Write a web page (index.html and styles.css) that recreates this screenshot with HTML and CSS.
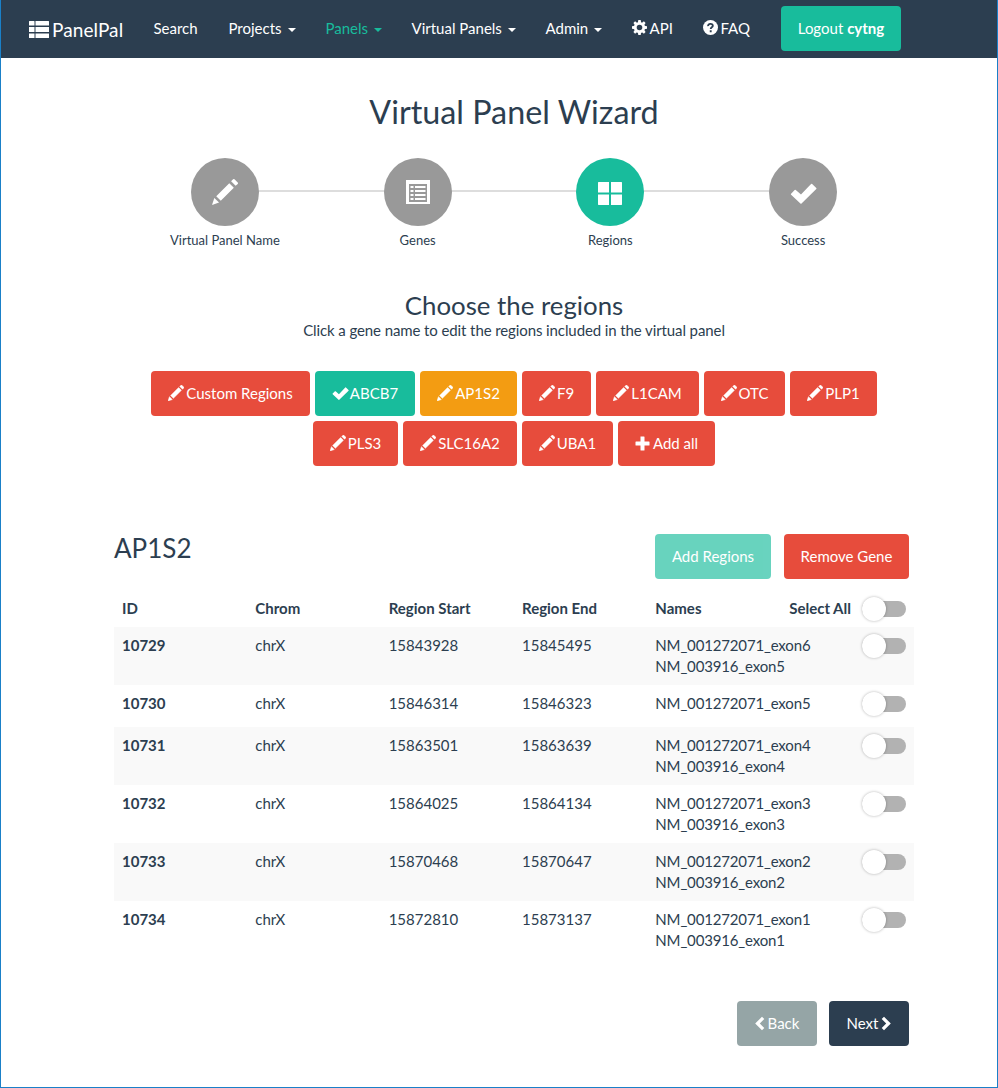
FILE: index.html
```html
<!DOCTYPE html>
<html lang="en">
<head>
<meta charset="utf-8">
<title>PanelPal</title>
<link rel="stylesheet" href="styles.css">
</head>
<body>
<svg class="defs" aria-hidden="true">
  <symbol id="pencil" viewBox="-16 -10 1226 1226"><path transform="matrix(1 0 0 -1 0 1200)" d="M1011 1210q19 0 33-13l153-153q13-14 13-33t-13-33l-99-92-214 214 95 96q13 14 32 14zM1013 800l-615-614-214 214 614 614zM317 96l-333-112 110 335z"/></symbol>
  <symbol id="ok" viewBox="0 0 15 15"><path d="M11.7 2.2q.3-.3.6 0l2.3 2.2q.3.3 0 .6l-8.2 8q-.3.3-.6 0L.6 8.200q-.3-.3 0-.6l2-2q.3-.3.6 0l2.900 2.500z"/></symbol>
  <symbol id="plus" viewBox="0 0 15 15"><path d="M5.500.5h3.500q.5 0 .5.5v4.500h4.500q.5 0 .5.5v3q0 .5-.5.5H9.500V14q0 .5-.5.5H6q-.5 0-.5-.5V9.500H1q-.5 0-.5-.5V6q0-.5.5-.5h4.500z"/></symbol>
  <symbol id="cog" viewBox="0 0 15 15"><circle cx="7.500" cy="7.500" r="4.200" fill="none" stroke="currentColor" stroke-width="2.800"/><path d="M6.300 0h2.400l.5 3H5.800zM6.300 15h2.400l.5-3H5.800zM0 6.300v2.400l3 .5V5.800zM15 6.300v2.400l-3 .5V5.800zM1.400 3l1.700-1.700 2.400 1.900-2.300 2.300zM13.600 3l-1.700-1.700-2.400 1.900 2.300 2.300zM1.400 12l1.700 1.700 2.400-1.900-2.300-2.300zM13.600 12l-1.700 1.700-2.400-1.900 2.300-2.300z"/></symbol>
  <symbol id="question" viewBox="0 0 15 15"><circle cx="7.500" cy="7.500" r="7.500"/><path d="M5.100 6.100C5 3.200 9.800 3.100 9.800 5.700c0 1.700-2.100 1.500-2.100 3.300M7.700 10.200v2" fill="none" stroke="#2c3e50" stroke-width="1.900"/></symbol>
  <symbol id="thlist" viewBox="0 0 20 17"><path d="M.5 0H5q.5 0 .5.5v4H0v-4Q0 0 .5 0zM6.500 0h13q.5 0 .5.500v4H6.500zM0 6h5.500v5H0zM6.500 6H20v5H6.500zM0 12.500h5.500V17h-5q-.5 0-.5-.5zM6.500 12.500H20v4q0 .5-.5.5h-13z"/></symbol>
  <symbol id="listalt" viewBox="0 0 24 24"><path fill-rule="evenodd" d="M0 0h24v24H0zM3 4v18h18V4z"/><path d="M4.500 6h3v2h-3zM9 6h10.500v2H9zM4.500 10h3v2h-3zM9 10h10.500v2H9zM4.500 14h3v2h-3zM9 14h10.500v2H9zM4.500 18h3v2h-3zM9 18h10.500v2H9z"/></symbol>
  <symbol id="large" viewBox="0 0 24 23"><path d="M.5 0H11v10.500H0V.5zM13 0h10.500l.5.5v10H13zM0 12.500h11V23H.5l-.5-.5zM13 12.500h11v10l-.5.5H13z"/></symbol>
  <symbol id="left" viewBox="0 0 10 15"><path d="M7 .7 9.300 3 4.800 7.500 9.300 12 7 14.300.2 7.500z"/></symbol>
  <symbol id="right" viewBox="0 0 10 15"><path d="M3 .7.7 3l4.500 4.500L.7 12 3 14.300l6.800-6.800z"/></symbol>
</svg>
<div class="window">
  <nav class="navbar">
    <a class="brand"><svg><use href="#thlist"/></svg><span>PanelPal</span></a>
    <a class="item search">Search</a>
    <a class="item projects">Projects<i class="caret"></i></a>
    <a class="item panels">Panels<i class="caret"></i></a>
    <a class="item virtual">Virtual Panels<i class="caret"></i></a>
    <a class="item admin">Admin<i class="caret"></i></a>
    <a class="item api"><svg class="icon"><use href="#cog"/></svg>API</a>
    <a class="item faq"><svg class="icon"><use href="#question"/></svg>FAQ</a>
    <a class="btn success logout">Logout&nbsp;<b>cytng</b></a>
  </nav>
  <main class="container">
    <h1>Virtual Panel Wizard</h1>
    <div class="steps">
      <div class="step"><div class="circle"><svg class="step-pencil"><use href="#pencil"/></svg></div><span>Virtual Panel Name</span></div>
      <div class="step"><div class="circle"><svg class="step-list"><use href="#listalt"/></svg></div><span>Genes</span></div>
      <div class="step"><div class="circle active"><svg class="step-large"><use href="#large"/></svg></div><span>Regions</span></div>
      <div class="step"><div class="circle"><svg class="step-ok"><use href="#ok"/></svg></div><span>Success</span></div>
    </div>
    <h2>Choose the regions</h2>
    <p class="hint">Click a gene name to edit the regions included in the virtual panel</p>
    <div class="genes">
      <div class="gene-row">
        <a class="btn danger w159"><svg class="icon pencil"><use href="#pencil"/></svg>Custom Regions</a>
        <a class="btn success w100"><svg class="icon check"><use href="#ok"/></svg>ABCB7</a>
        <a class="btn warning w97"><svg class="icon pencil"><use href="#pencil"/></svg>AP1S2</a>
        <a class="btn danger w69"><svg class="icon pencil"><use href="#pencil"/></svg>F9</a>
        <a class="btn danger w103"><svg class="icon pencil"><use href="#pencil"/></svg>L1CAM</a>
        <a class="btn danger w81"><svg class="icon pencil"><use href="#pencil"/></svg>OTC</a>
        <a class="btn danger w87"><svg class="icon pencil"><use href="#pencil"/></svg>PLP1</a>
      </div>
      <div class="gene-row">
        <a class="btn danger w85"><svg class="icon pencil"><use href="#pencil"/></svg>PLS3</a>
        <a class="btn danger w114"><svg class="icon pencil"><use href="#pencil"/></svg>SLC16A2</a>
        <a class="btn danger w91"><svg class="icon pencil"><use href="#pencil"/></svg>UBA1</a>
        <a class="btn danger w97"><svg class="icon"><use href="#plus"/></svg>Add all</a>
      </div>
    </div>
    <div class="gene-head">
      <h3>AP1S2</h3>
      <a class="btn success disabled w116">Add Regions</a>
      <a class="btn danger w125">Remove Gene</a>
    </div>
    <div class="table">
      <div class="row head"><span>ID</span><span>Chrom</span><span>Region Start</span><span>Region End</span><span>Names</span><span class="toggle-cell">Select All<i class="toggle"></i></span></div>
      <div class="row"><b>10729</b><span>chrX</span><span>15843928</span><span>15845495</span><span class="names">NM_001272071_exon6<br>NM_003916_exon5</span><span class="toggle-cell"><i class="toggle"></i></span></div>
      <div class="row"><b>10730</b><span>chrX</span><span>15846314</span><span>15846323</span><span class="names">NM_001272071_exon5</span><span class="toggle-cell"><i class="toggle"></i></span></div>
      <div class="row"><b>10731</b><span>chrX</span><span>15863501</span><span>15863639</span><span class="names">NM_001272071_exon4<br>NM_003916_exon4</span><span class="toggle-cell"><i class="toggle"></i></span></div>
      <div class="row"><b>10732</b><span>chrX</span><span>15864025</span><span>15864134</span><span class="names">NM_001272071_exon3<br>NM_003916_exon3</span><span class="toggle-cell"><i class="toggle"></i></span></div>
      <div class="row"><b>10733</b><span>chrX</span><span>15870468</span><span>15870647</span><span class="names">NM_001272071_exon2<br>NM_003916_exon2</span><span class="toggle-cell"><i class="toggle"></i></span></div>
      <div class="row"><b>10734</b><span>chrX</span><span>15872810</span><span>15873137</span><span class="names">NM_001272071_exon1<br>NM_003916_exon1</span><span class="toggle-cell"><i class="toggle"></i></span></div>
    </div>
    <div class="pager">
      <a class="btn default"><svg class="chevron"><use href="#left"/></svg>Back</a>
      <a class="btn primary">Next<svg class="chevron"><use href="#right"/></svg></a>
    </div>
  </main>
</div>
</body>
</html>
```
FILE: styles.css
```css
* { box-sizing: border-box; }
body { margin: 0; background: #fff; color: #2c3e50; font: 15px/21px Lato, "Liberation Sans", sans-serif; }
h1, h2, h3, p { margin: 0; font-weight: 400; }
svg { display: block; flex: none; fill: currentColor; }
.defs { position: absolute; width: 0; height: 0; }
.window { height: 1088px; border: 1px solid #1a80c8; border-top: 0; }

.navbar { display: flex; height: 58px; padding-left: 28px; background: #2c3e50; color: #fff; }
.navbar > a { display: flex; flex: none; align-items: center; white-space: nowrap; }
.brand { width: 124.500px; font-size: 19px; letter-spacing: .08px; padding-top: 1px; }
.brand svg { width: 20px; height: 17px; margin-right: 3px; }
.item { height: 57px; }
.search { width: 75px; }
.projects { width: 97px; }
.panels { width: 86px; color: #18bc9c; }
.virtual { width: 134px; }
.admin { width: 86px; }
.api { width: 71px; }
.faq { width: 78.500px; }
.caret { margin: 2px 0 0 6px; border: 4px solid transparent; border-top-color: currentColor; border-bottom: 0; }
.icon { width: 15px; height: 15px; margin-right: 3px; }
.api .icon, .faq .icon { margin-top: -2px; }

.btn { display: flex; flex: none; align-items: center; justify-content: center; height: 45px; border-radius: 4px; color: #fff; white-space: nowrap; }
.btn .icon { margin-top: -1px; }
.btn .pencil { width: 16px; height: 16px; margin-right: 2px; stroke: currentColor; stroke-width: 35px; }
.btn .check { width: 17px; height: 17px; margin-right: 1px; }
.success { background: #18bc9c; }
.danger { background: #e74c3c; }
.warning { background: #f39c12; }
.default { background: #95a5a6; }
.primary { background: #2c3e50; }
.disabled { opacity: .65; }
.logout { width: 120px; margin-top: 6px; }

.container { width: 800px; margin-left: 113px; }
h1 { height: 74px; padding-top: 34px; text-align: center; font-size: 32.300px; line-height: 39px; }
.steps { display: grid; grid-template-columns: repeat(4, 1fr); width: 771px; margin: 26px auto 0; background: linear-gradient(#ddd, #ddd) 96px 32px / 578px 2px no-repeat; }
.step { display: flex; flex-direction: column; align-items: center; font-size: 13px; line-height: 18px; }
.circle { display: flex; align-items: center; justify-content: center; width: 68px; height: 68px; margin-bottom: 5px; border-radius: 50%; background: #999; color: #fff; }
.active { background: #18bc9c; }
.step-pencil { width: 26px; height: 26px; margin-left: 1px; }
.step-list { width: 24px; height: 24px; margin-left: 1px; }
.step-large { width: 24px; height: 23px; margin-top: 2px; margin-right: 1px; }
.step-ok { width: 27px; height: 27px; margin: 2px 0 0 1px; }
h2 { margin-top: 41px; text-align: center; font-size: 25.800px; line-height: 30px; }
.hint { text-align: center; letter-spacing: -.1px; }
.genes { display: flex; flex-direction: column; gap: 5px; margin-top: 30px; }
.gene-row { display: flex; justify-content: center; gap: 5px; }
.w159 { width: 159px; }
.w100 { width: 100px; }
.w97 { width: 97px; }
.w69 { width: 69px; }
.w103 { width: 103px; }
.w81 { width: 81px; }
.w87 { width: 87px; }
.w85 { width: 85px; }
.w114 { width: 114px; }
.w91 { width: 91px; }
.w116 { width: 116px; }
.w125 { width: 125px; }
.gene-head { display: flex; gap: 13px; height: 56px; margin-top: 68px; padding-right: 5px; }
h3 { flex: 1; font-size: 26px; line-height: 29px; }

.row { display: grid; grid-template-columns: repeat(6, minmax(0, 1fr)); min-height: 42px; padding: 8px 0; }
.row > * { padding-left: 8px; white-space: nowrap; }
.row:nth-child(even) { background: #f9f9f9; }
.names { letter-spacing: -.16px; }
.head { min-height: 37px; font-weight: 700; }
.row .toggle-cell { display: flex; justify-content: flex-end; padding: 0 8px 0 0; }
.toggle { display: flex; align-items: center; flex: none; width: 44px; height: 16px; margin: 3px 0 0 11px; border-radius: 8px; background: #b2b2b2; }
.toggle::before { content: ""; width: 24px; height: 24px; flex: none; border-radius: 50%; background: #fff; box-shadow: 0 0 3px rgba(0, 0, 0, .3); }
.pager { display: flex; justify-content: flex-end; gap: 12px; margin-top: 42px; padding-right: 5px; }
.pager .btn { width: 80px; gap: 3px; }
.chevron { width: 10px; height: 15px; }
```
